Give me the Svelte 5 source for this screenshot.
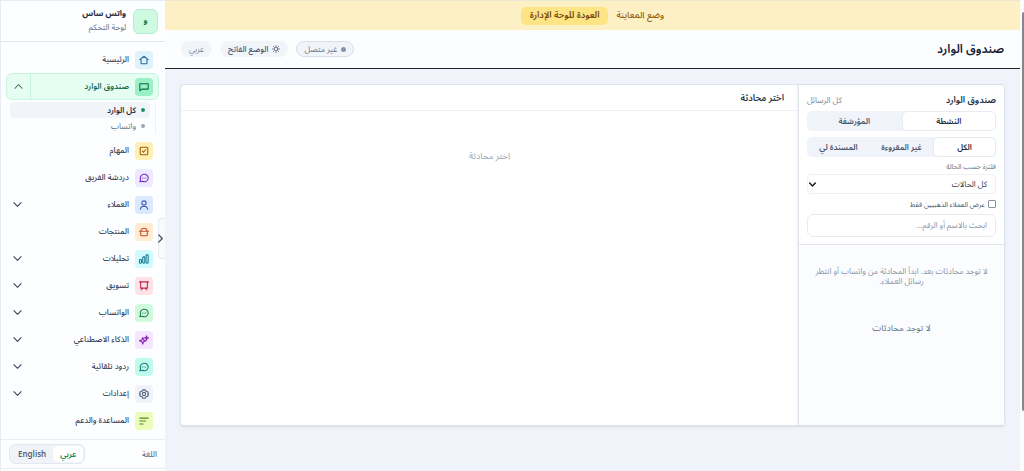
<script lang="ts">
  type NavItem = {
    label: string;
    icon: string;
    tone: string;
    expandable?: boolean;
  };

  const navItems: NavItem[] = [
    { label: "المهام", icon: "tasks", tone: "amber" },
    { label: "دردشة الفريق", icon: "chat", tone: "violet" },
    { label: "العملاء", icon: "user", tone: "blue", expandable: true },
    { label: "المنتجات", icon: "products", tone: "orange" },
    { label: "تحليلات", icon: "chart", tone: "cyan", expandable: true },
    { label: "تسويق", icon: "marketing", tone: "rose", expandable: true },
    { label: "الواتساب", icon: "chat", tone: "green", expandable: true },
    { label: "الذكاء الاصطناعي", icon: "sparkles", tone: "fuchsia", expandable: true },
    { label: "ردود تلقائية", icon: "chat", tone: "teal", expandable: true },
    { label: "إعدادات", icon: "settings", tone: "slate", expandable: true },
    { label: "المساعدة والدعم", icon: "help", tone: "lime" },
  ];

  const scopes = ["النشطة", "المؤرشفة"];
  const filters = ["الكل", "غير المقروءة", "المسندة لي"];

  let scope = $state(scopes[0]);
  let filter = $state(filters[0]);
  let language = $state("ar");
  let inboxOpen = $state(true);
  let goldOnly = $state(false);
  let search = $state("");
</script>

{#snippet icon(name: string)}
  <svg class="icon" viewBox="0 0 24 24" aria-hidden="true">
    {#if name === "home"}
      <path d="m2 11 10-8 10 8M5 9v12h14V9" />
    {:else if name === "inbox"}
      <path d="M2 4h20v13H7l-5 4z" />
    {:else if name === "tasks"}
      <rect x="3" y="3" width="18" height="18" rx="2" />
      <path d="m8 12 3 3 5-6" />
    {:else if name === "chat"}
      <path d="M2 21l2-5a9.500 9 0 1 1 4 4z" />
      <path d="M8 12h.1M12 12h.1M16 12h.1" />
    {:else if name === "user"}
      <circle cx="12" cy="7" r="5" />
      <path d="M3 22c1-5 4-7 9-7s8 2 9 7" />
    {:else if name === "products"}
      <path d="M1 10h22M4 10v9c0 1 1 2 2 2h12c1 0 2-1 2-2v-9M5 9c0-4 3-6 7-6s7 2 7 6" />
    {:else if name === "chart"}
      <rect x="1" y="13" width="5" height="9" rx="2" />
      <rect x="9" y="7" width="5" height="15" rx="2" />
      <rect x="17" y="2" width="5" height="20" rx="2" />
    {:else if name === "marketing"}
      <path d="M1 2h22M4 2v15h16V2M9 17l-3 4M15 17l3 4" />
    {:else if name === "sparkles"}
      <path d="m9 6 2 6 6 2-6 2-2 6-2-6-6-2 6-2z" />
      <path d="m18 2 1 4 4 1-4 1-1 4-1-4-4-1 4-1z" fill="currentColor" />
    {:else if name === "settings"}
      <path d="m9 2-1 3-3 1-3 1 1 3-2 2 2 2-1 3 3 1 3 1 1 3h6l1-3 3-1 3-1-1-3 2-2-2-2 1-3-3-1-3-1-1-3z" />
      <circle cx="12" cy="12" r="4" />
    {:else if name === "help"}
      <path d="M2 5h20M2 12h14M2 19h8" />
    {/if}
  </svg>
{/snippet}

{#snippet chevron()}
  <svg class="chevron" viewBox="0 0 10 10" aria-hidden="true"><path d="m1 3 4 4 4-4" /></svg>
{/snippet}

<div class="app">
  <aside class="sidebar" dir="rtl">
    <header class="brand">
      <span class="logo">و</span>
      <div class="brand-text">
        <strong>واتس ساس</strong>
        <span>لوحة التحكم</span>
      </div>
    </header>

    <nav class="nav">
      <a class="nav-row" href="#home">
        <span class="tile sky">{@render icon("home")}</span>
        <span class="label">الرئيسية</span>
      </a>

      <div class="nav-row current">
        <a class="current-link" href="#inbox">
          <span class="tile emerald">{@render icon("inbox")}</span>
          <span class="label">صندوق الوارد</span>
        </a>
        <button class="toggle" class:open={inboxOpen} aria-label="صندوق الوارد" onclick={() => (inboxOpen = !inboxOpen)}>
          {@render chevron()}
        </button>
      </div>
      {#if inboxOpen}
        <div class="subnav">
          <a class="active" href="#all">كل الوارد</a>
          <a href="#whatsapp">واتساب</a>
        </div>
      {/if}

      {#each navItems as item}
        <a class="nav-row" href="#{item.icon}">
          <span class="tile {item.tone}">{@render icon(item.icon)}</span>
          <span class="label">{item.label}</span>
          {#if item.expandable}{@render chevron()}{/if}
        </a>
      {/each}
    </nav>

    <footer class="language">
      <span>اللغة</span>
      <div class="lang-switch">
        <button class:selected={language === "ar"} onclick={() => (language = "ar")}>عربي</button>
        <button class:selected={language === "en"} onclick={() => (language = "en")}>English</button>
      </div>
    </footer>

    <button class="collapse" aria-label="طي القائمة">{@render chevron()}</button>
  </aside>

  <div class="content" dir="rtl">
    <div class="preview-bar">
      <span>وضع المعاينة</span>
      <a href="#admin">العودة للوحة الإدارة</a>
    </div>

    <header class="topbar">
      <h1>صندوق الوارد</h1>
      <div class="actions">
        <span class="pill offline"><i class="dot"></i>غير متصل</span>
        <button class="pill theme">
          <svg class="sun" viewBox="0 0 24 24" aria-hidden="true">
            <circle cx="12" cy="12" r="5" />
            <path d="M12 1v4M12 19v4M1 12h4M19 12h4M4 4l3 3M17 17l3 3M4 20l3-3M17 7l3-3" />
          </svg>
          الوضع الفاتح
        </button>
        <button class="pill">عربي</button>
      </div>
    </header>

    <main class="workspace">
      <section class="inbox">
        <div class="list">
          <div class="list-head">
            <div class="list-title">
              <h2>صندوق الوارد</h2>
              <span>كل الرسائل</span>
            </div>
            <div class="segments two">
              {#each scopes as name}
                <button class:selected={scope === name} onclick={() => (scope = name)}>{name}</button>
              {/each}
            </div>
            <div class="segments three">
              {#each filters as name}
                <button class:selected={filter === name} onclick={() => (filter = name)}>{name}</button>
              {/each}
            </div>
            <label class="field-label" for="status">فلترة حسب الحالة</label>
            <div class="select-box">
              <select id="status">
                <option>كل الحالات</option>
              </select>
              {@render chevron()}
            </div>
            <label class="check">
              <input type="checkbox" bind:checked={goldOnly} />
              عرض العملاء الذهبيين فقط
            </label>
            <input class="search" type="text" aria-label="بحث" placeholder="ابحث بالاسم أو الرقم..." bind:value={search} />
          </div>
          <div class="list-body">
            <p class="hint">لا توجد محادثات بعد. ابدأ المحادثة من واتساب أو انتظر رسائل العملاء.</p>
            <p class="none">لا توجد محادثات</p>
          </div>
        </div>
        <div class="thread">
          <h2>اختر محادثة</h2>
          <p>اختر محادثة</p>
        </div>
      </section>
    </main>
  </div>

  <div class="scroll-track" aria-hidden="true"><div class="thumb"></div></div>
</div>

<style>
  :global(body) {
    margin: 0;
    background: #f0f3f9;
    color: #334155;
    font-family: "Noto Sans Arabic", "Noto Sans", "DejaVu Sans", sans-serif;
    font-size: 8px;
  }

  * {
    box-sizing: border-box;
  }

  h1,
  h2,
  p {
    margin: 0;
  }

  a {
    color: inherit;
    text-decoration: none;
  }

  button,
  input,
  select {
    font: inherit;
    color: inherit;
    margin: 0;
  }

  button {
    border: 0;
    padding: 0;
    background: none;
    cursor: pointer;
  }

  svg {
    fill: none;
    stroke: currentColor;
    stroke-width: 2;
    stroke-linecap: round;
    stroke-linejoin: round;
  }

  .app {
    display: grid;
    grid-template-columns: 165px 1fr 4px;
    height: 100vh;
    overflow: hidden;
  }

  .sidebar {
    position: relative;
    display: flex;
    flex-direction: column;
    background: #fdfeff;
    border: 1px solid #e8ecf2;
    border-right: 0;
    border-bottom: 0;
  }

  .brand {
    display: flex;
    align-items: center;
    gap: 7px;
    height: 41px;
    padding: 0 7px;
    border-bottom: 1px solid #e2e8ee;
  }

  .logo {
    display: grid;
    place-items: center;
    width: 25px;
    height: 25px;
    border: 1px solid #b4efd0;
    border-radius: 6px;
    background: #cffae2;
    color: #15803d;
    font-weight: 700;
    line-height: 12px;
  }

  .brand-text {
    display: flex;
    flex-direction: column;
    line-height: 14px;
    color: #64748b;
  }

  .brand-text strong {
    color: #1e293b;
  }

  .nav {
    flex: 1;
    padding: 4px 6px 0 5px;
  }

  .nav-row {
    display: flex;
    align-items: center;
    gap: 6px;
    height: 27px;
    padding: 0 6px 0 7px;
    font-weight: 500;
  }

  .label {
    flex: 1;
    white-space: nowrap;
  }

  .tile {
    display: grid;
    place-items: center;
    width: 18px;
    height: 18px;
    border-radius: 4px;
  }

  .icon {
    width: 10px;
    height: 10px;
    stroke-width: 2.6;
  }

  .sky { background: #dff2fe; color: #31709c; }
  .emerald { background: #9cf0c6; color: #0b6b4c; }
  .amber { background: #fef0b5; color: #a16207; }
  .violet { background: #ede9fe; color: #7e22ce; }
  .blue { background: #dbe9fe; color: #3b55b5; }
  .orange { background: #ffead2; color: #c2512c; }
  .cyan { background: #cffafe; color: #197a91; }
  .rose { background: #ffe2e6; color: #be234c; }
  .green { background: #cffadd; color: #23804b; }
  .fuchsia { background: #f4e6fe; color: #8b1fb2; }
  .teal { background: #bffbed; color: #177d70; }
  .slate { background: #f0f3fa; color: #52617a; }
  .lime { background: #ebfdb9; color: #588128; }

  .chevron {
    width: 9px;
    height: 9px;
    color: #334155;
    stroke-width: 1.2;
  }

  .nav-row.current {
    padding: 0;
    border: 1px solid #c5f4df;
    border-radius: 6px;
    background: #e6fdf2;
    color: #14694e;
    font-weight: 600;
  }

  .current-link {
    flex: 1;
    display: flex;
    align-items: center;
    gap: 6px;
    padding-right: 5px;
  }

  .toggle {
    align-self: stretch;
    display: grid;
    place-items: center;
    width: 24px;
    border-right: 1px solid #c5f4df;
  }

  .toggle .chevron {
    color: #4d7c6c;
  }

  .toggle.open .chevron {
    transform: rotate(180deg);
  }

  .subnav {
    margin: 2px 3px 3px 4px;
    padding: 0 5px 0 0;
    border-right: 1px solid #eef2f6;
  }

  .subnav a {
    display: flex;
    align-items: center;
    gap: 5px;
    height: 16px;
    padding: 0 5px;
    border-radius: 4px;
    color: #64748b;
  }

  .subnav a::before {
    content: "";
    width: 4px;
    height: 4px;
    border-radius: 50%;
    background: #9ba3ae;
  }

  .subnav a.active {
    background: #f1f4f9;
    color: #1e293b;
    font-weight: 600;
  }

  .subnav a.active::before {
    background: #15916a;
  }

  .language {
    display: flex;
    align-items: center;
    justify-content: space-between;
    height: 30px;
    margin-bottom: 2px;
    padding: 0 8px;
    border-top: 1px solid #e8edf2;
    border-bottom: 1px solid #e8edf2;
    color: #64748b;
    font-weight: 500;
  }

  .lang-switch {
    display: flex;
    padding: 1px;
    border: 1px solid #e2e8f0;
    border-radius: 6px;
    background: #f0f3f8;
  }

  .lang-switch button {
    height: 16px;
    padding: 0 7px;
    border-radius: 5px;
    font-weight: 600;
    color: #566277;
  }

  .lang-switch .selected {
    background: #fff;
    color: #168557;
  }

  .collapse {
    position: absolute;
    right: 0;
    top: 217px;
    display: grid;
    place-items: center;
    width: 7px;
    height: 41px;
    border: 1px solid #e5eaf1;
    border-right: 0;
    border-radius: 4px 0 0 4px;
    background: #f8fafc;
  }

  .collapse .chevron {
    transform: rotate(-90deg);
  }

  .content {
    display: flex;
    flex-direction: column;
    min-width: 0;
  }

  .preview-bar {
    display: flex;
    align-items: center;
    justify-content: center;
    gap: 8px;
    height: 30px;
    border-top: 1px solid #ece7d4;
    background: #fef0c5;
    color: #92600f;
    font-size: 9px;
    font-weight: 500;
  }

  .preview-bar a {
    padding: 0 9px;
    border-radius: 5px;
    background: #fde485;
    color: #78450e;
    font-weight: 600;
    line-height: 18px;
  }

  .topbar {
    display: flex;
    align-items: center;
    justify-content: space-between;
    height: 39px;
    padding: 0 16px;
    border-bottom: 1px solid #1e2430;
    background: #fcfdff;
  }

  .topbar h1 {
    font-size: 12px;
    font-weight: 600;
    color: #172033;
  }

  .actions {
    display: flex;
    align-items: center;
    gap: 8px;
  }

  .pill {
    display: flex;
    align-items: center;
    gap: 4px;
    height: 16px;
    padding: 0 8px;
    border-radius: 8px;
    background: #f1f4f9;
    color: #7b8799;
  }

  .pill.theme {
    color: #475569;
    font-weight: 500;
  }

  .pill.offline {
    padding: 0 7px;
    border: 1px solid #d9dfe9;
    color: #64748b;
  }

  .dot {
    width: 5px;
    height: 5px;
    border-radius: 50%;
    background: #8794ad;
  }

  .sun {
    width: 8px;
    height: 8px;
  }

  .workspace {
    flex: 1;
    display: flex;
    min-height: 0;
    padding: 15px 15px 45px;
  }

  .inbox {
    flex: 1;
    display: grid;
    grid-template-columns: 206px 1fr;
    border: 1px solid #dfe5ee;
    border-radius: 4px;
    background: #fff;
    box-shadow: 0 1px 2px #0f172a18;
  }

  .list {
    display: flex;
    flex-direction: column;
    border-left: 1px solid #dde3ea;
    box-shadow: -1px 0 2px #0f172a10;
  }

  .list-head {
    display: flex;
    flex-direction: column;
    padding: 8px 8px 7px;
    border-bottom: 1px solid #dfe4ea;
  }

  .list-title {
    display: flex;
    align-items: center;
    justify-content: space-between;
    height: 14px;
    margin-bottom: 4px;
    color: #7b8799;
  }

  h2 {
    font-size: 9px;
    font-weight: 600;
    color: #263245;
  }

  .segments {
    display: grid;
    height: 20px;
    border-radius: 5px;
    background: #f0f4fa;
  }

  .segments.two {
    grid-template-columns: 1fr 1fr;
    margin-bottom: 6px;
  }

  .segments.three {
    grid-template-columns: 1fr 1fr 1fr;
    margin-bottom: 4px;
  }

  .segments button {
    border-radius: 5px;
    color: #475569;
    font-weight: 600;
    white-space: nowrap;
  }

  .segments .selected {
    border: 1px solid #e7ecf2;
    background: #fff;
    color: #1e293b;
  }

  .field-label {
    margin-bottom: 1px;
    color: #64748b;
    font-size: 7px;
    line-height: 12px;
  }

  .select-box {
    position: relative;
  }

  select {
    display: block;
    width: 100%;
    height: 20px;
    padding: 0 8px;
    border: 1px solid #eff2f5;
    border-radius: 4px;
    background: #fff;
    appearance: none;
  }

  .select-box .chevron {
    position: absolute;
    left: 2px;
    top: 6px;
    width: 7px;
    color: #0f172a;
    stroke-width: 2;
    pointer-events: none;
  }

  .check {
    display: flex;
    align-items: center;
    gap: 3px;
    height: 20px;
    color: #475569;
    font-size: 7px;
  }

  .check input {
    width: 8px;
    height: 8px;
    border: 1px solid #8b929c;
    border-radius: 1px;
    background: #fff;
    appearance: none;
  }

  .check input:checked {
    background: #15916a;
  }

  .search {
    width: 100%;
    height: 23px;
    padding: 0 8px;
    border: 1px solid #e8ecf1;
    border-radius: 6px;
    background: #fff;
  }

  .search::placeholder {
    color: #8d98a8;
  }

  .list-body {
    flex: 1;
    padding: 22px 16px;
    background: #fafcfe;
    text-align: center;
  }

  .hint {
    color: #8b96a6;
    line-height: 10px;
  }

  .none {
    margin-top: 35px;
    color: #64748b;
    font-size: 9px;
    line-height: 14px;
  }

  .thread h2 {
    height: 26px;
    padding-right: 14px;
    border-bottom: 1px solid #edf0f4;
    line-height: 28px;
  }

  .thread p {
    margin-top: 39px;
    color: #9aa4b2;
    font-size: 9px;
    line-height: 14px;
    text-align: center;
  }

  .scroll-track {
    padding-top: 12px;
    background: #fcfcfd;
  }

  .thumb {
    width: 2px;
    height: 87%;
    margin-left: auto;
    border-radius: 2px 0 0 2px;
    background: #85878b;
  }
</style>
